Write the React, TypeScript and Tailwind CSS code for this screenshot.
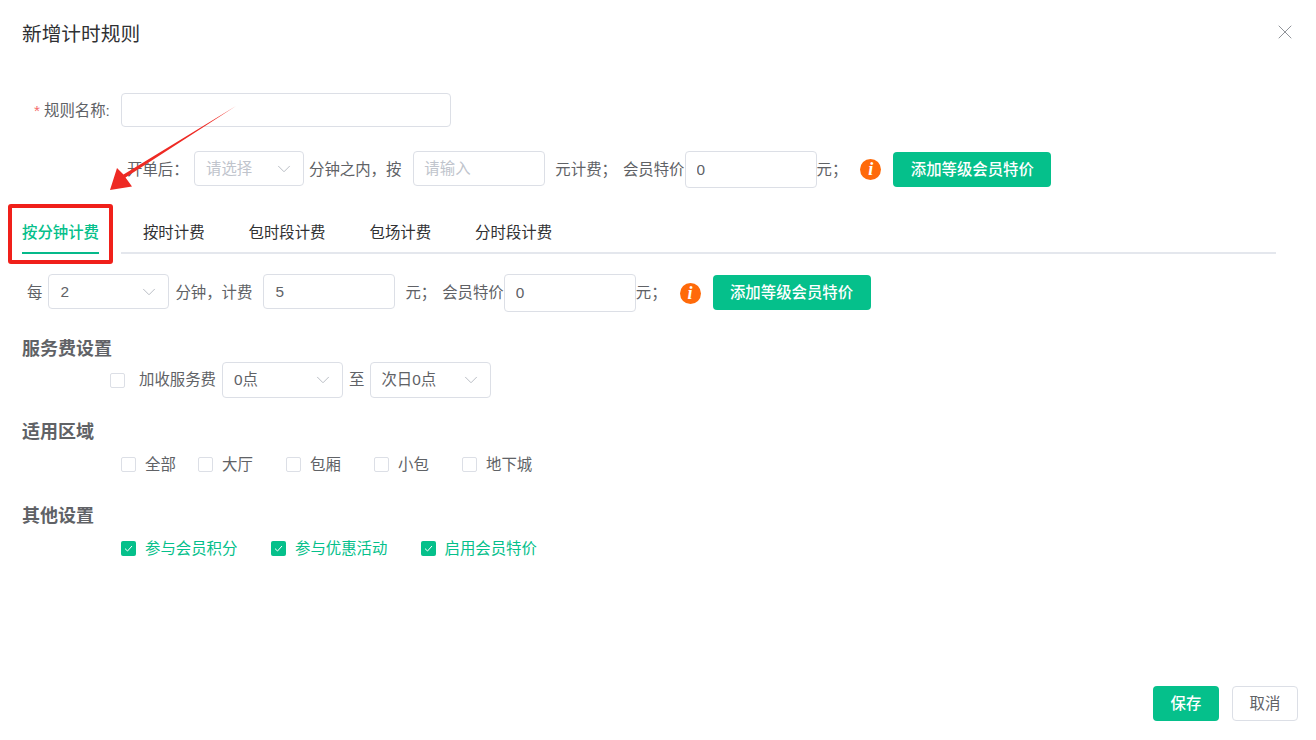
import { ChevronDown, X } from 'lucide-react'
import clsx from 'clsx'

function Select({ value, placeholder, className }: { value?: string; placeholder?: string; className?: string }) {
  return (
    <div className={clsx('flex h-[35px] items-center justify-between rounded-[4px] border border-[#dcdfe6] bg-white pr-[8px]', className)}>
      <span className={value ? 'text-[#606266]' : 'text-[#c0c4cc]'}>{value ?? placeholder}</span>
      <ChevronDown size={22} strokeWidth={1} className="text-[#b4b8c0]" />
    </div>
  )
}

function TextInput({ value, placeholder, className }: { value?: string; placeholder?: string; className?: string }) {
  return (
    <input
      readOnly
      value={value ?? ''}
      placeholder={placeholder}
      className={clsx('rounded-[4px] border border-[#dcdfe6] bg-white pr-[10px] text-[#606266] outline-none placeholder:text-[#c0c4cc]', className)}
    />
  )
}

function AddButton({ className }: { className?: string }) {
  return (
    <button className={clsx('h-[35px] w-[158px] rounded-[4px] bg-[#05c08b] font-medium text-white', className)}>
      添加等级会员特价
    </button>
  )
}

function InfoDot({ className }: { className?: string }) {
  return (
    <span className={clsx('flex size-[21px] items-center justify-center rounded-full bg-[#ff6a0a] font-["Liberation_Serif",serif] text-[18px] font-bold italic text-white', className)}>
      i
    </span>
  )
}

function Check({ label, checked, className }: { label: string; checked?: boolean; className?: string }) {
  return (
    <label className={clsx('flex items-center', className)}>
      {checked ? (
        <span className="flex size-[15px] items-center justify-center rounded-[2px] bg-[#05c08b]">
          <svg viewBox="0 0 15 15" className="size-[15px]" fill="none" stroke="white" strokeWidth="1">
            <path d="M4 7.6 6.5 10 11 5" />
          </svg>
        </span>
      ) : (
        <span className="size-[15px] rounded-[2px] border border-[#dcdfe6] bg-white" />
      )}
      <span className={clsx('ml-[9px] pt-[2px]', checked ? 'text-[#05c08b]' : 'text-[#606266]')}>{label}</span>
    </label>
  )
}

function Heading({ children, className }: { children: string; className?: string }) {
  return <h3 className={clsx('ml-[22px] h-[24px] text-[18px] font-bold leading-[24px] text-[#606266]', className)}>{children}</h3>
}

export default function App() {
  return (
    <div className='relative flex h-[740px] w-[1316px] flex-col overflow-hidden bg-white font-["Liberation_Sans","Noto_Sans_CJK_SC",sans-serif] text-[15.4px] text-[#606266]'>
      {/* header */}
      <div className="mt-[20px] flex h-[28px] items-center justify-between pl-[22px] pr-[19px]">
        <h2 className="pt-[2px] text-[19.7px] text-[#303133]">新增计时规则</h2>
        <X size={24} strokeWidth={1} className="-mt-[4px] text-[#909399]" />
      </div>

      {/* rule name */}
      <div className="mt-[45px] flex h-[34px] items-center">
        <span className="ml-[34px] w-[87px] whitespace-nowrap pt-[2px]">
          <span className="mr-[4px] text-[#f56c6c]">*</span>规则名称:
        </span>
        <TextInput className="h-[34px] w-[330px] pl-[11px]" />
      </div>

      {/* first charge */}
      <div className="mt-[24px] flex h-[37px] items-center pl-[127px]">
        <span className="w-[67px]">开单后：</span>
        <Select placeholder="请选择" className="mb-[2px] w-[110px] pl-[11px]" />
        <span className="ml-[5px]">分钟之内，按</span>
        <TextInput placeholder="请输入" className="mb-[2px] ml-[12px] h-[35px] w-[132px] pl-[10px]" />
        <span className="ml-[10px]">元计费；</span>
        <span className="ml-[6px]">会员特价</span>
        <TextInput value="0" className="h-[37px] w-[132px] pl-[11px]" />
        <span>元；</span>
        <InfoDot className="ml-[13px]" />
        <AddButton className="ml-[12px]" />
      </div>

      {/* tabs */}
      <div className="mt-[25px] flex h-[41px] items-stretch pl-[22px] pr-[40px]">
        <div className="flex items-center border-b-2 border-[#05b98a] pt-[1px] font-medium text-[#05c08b]">按分钟计费</div>
        <div className="ml-[22px] flex flex-1 items-center gap-[44px] border-b-2 border-[#e4e7ed] pl-[22px] pt-[1px] text-[#303133]">
          <span>按时计费</span>
          <span>包时段计费</span>
          <span>包场计费</span>
          <span>分时段计费</span>
        </div>
      </div>

      {/* per minute */}
      <div className="mt-[20px] flex h-[38px] items-center pl-[27px]">
        <span>每</span>
        <Select value="2" className="mb-[3px] ml-[6px] w-[121px] pl-[11px]" />
        <span className="ml-[6px]">分钟，计费</span>
        <TextInput value="5" className="mb-[3px] ml-[11px] h-[35px] w-[132px] pl-[11px]" />
        <span className="ml-[10px]">元；</span>
        <span className="ml-[6px]">会员特价</span>
        <TextInput value="0" className="h-[38px] w-[132px] pl-[11px]" />
        <span>元；</span>
        <InfoDot className="ml-[13px]" />
        <AddButton className="mb-[1px] ml-[12px]" />
      </div>

      <Heading className="mt-[25px]">服务费设置</Heading>
      <div className="mt-[1px] flex h-[36px] items-center pl-[110px]">
        <Check label="" />
        <span className="ml-[5px]">加收服务费</span>
        <Select value="0点" className="ml-[6px] h-[36px] w-[121px] pl-[11px]" />
        <span className="ml-[6px]">至</span>
        <Select value="次日0点" className="ml-[6px] h-[36px] w-[121px] pl-[10px]" />
      </div>

      <Heading className="mt-[22px]">适用区域</Heading>
      <div className="mt-[8px] flex h-[24px] items-center pl-[121px]">
        <Check label="全部" className="w-[77px]" />
        <Check label="大厅" className="w-[88px]" />
        <Check label="包厢" className="w-[88px]" />
        <Check label="小包" className="w-[88px]" />
        <Check label="地下城" />
      </div>

      <Heading className="mt-[28px]">其他设置</Heading>
      <div className="mt-[8px] flex h-[24px] items-center pl-[121px]">
        <Check checked label="参与会员积分" className="w-[150px]" />
        <Check checked label="参与优惠活动" className="w-[149.5px]" />
        <Check checked label="启用会员特价" />
      </div>

      {/* footer */}
      <div className="mb-[19px] mt-auto flex justify-end gap-[13px] pr-[18px]">
        <button className="h-[35px] w-[66px] rounded-[4px] bg-[#05c08b] font-medium text-white">保存</button>
        <button className="h-[35px] w-[66px] rounded-[4px] border border-[#dcdfe6] bg-white text-[#606266]">取消</button>
      </div>

      {/* annotation drawn on top of the screenshot */}
      <div className="pointer-events-none absolute left-[8px] top-[204px] h-[60px] w-[105px] rounded-[3px] border-4 border-[#f0201a]" />
      <svg className="pointer-events-none absolute left-[100px] top-[100px] size-[145px]" viewBox="100 100 145 145">
        <path d="M236 106 125.500 177.500 132 186.500 110 190 117 168 123.500 174.500Z" fill="#ee2a24" />
      </svg>
    </div>
  )
}
